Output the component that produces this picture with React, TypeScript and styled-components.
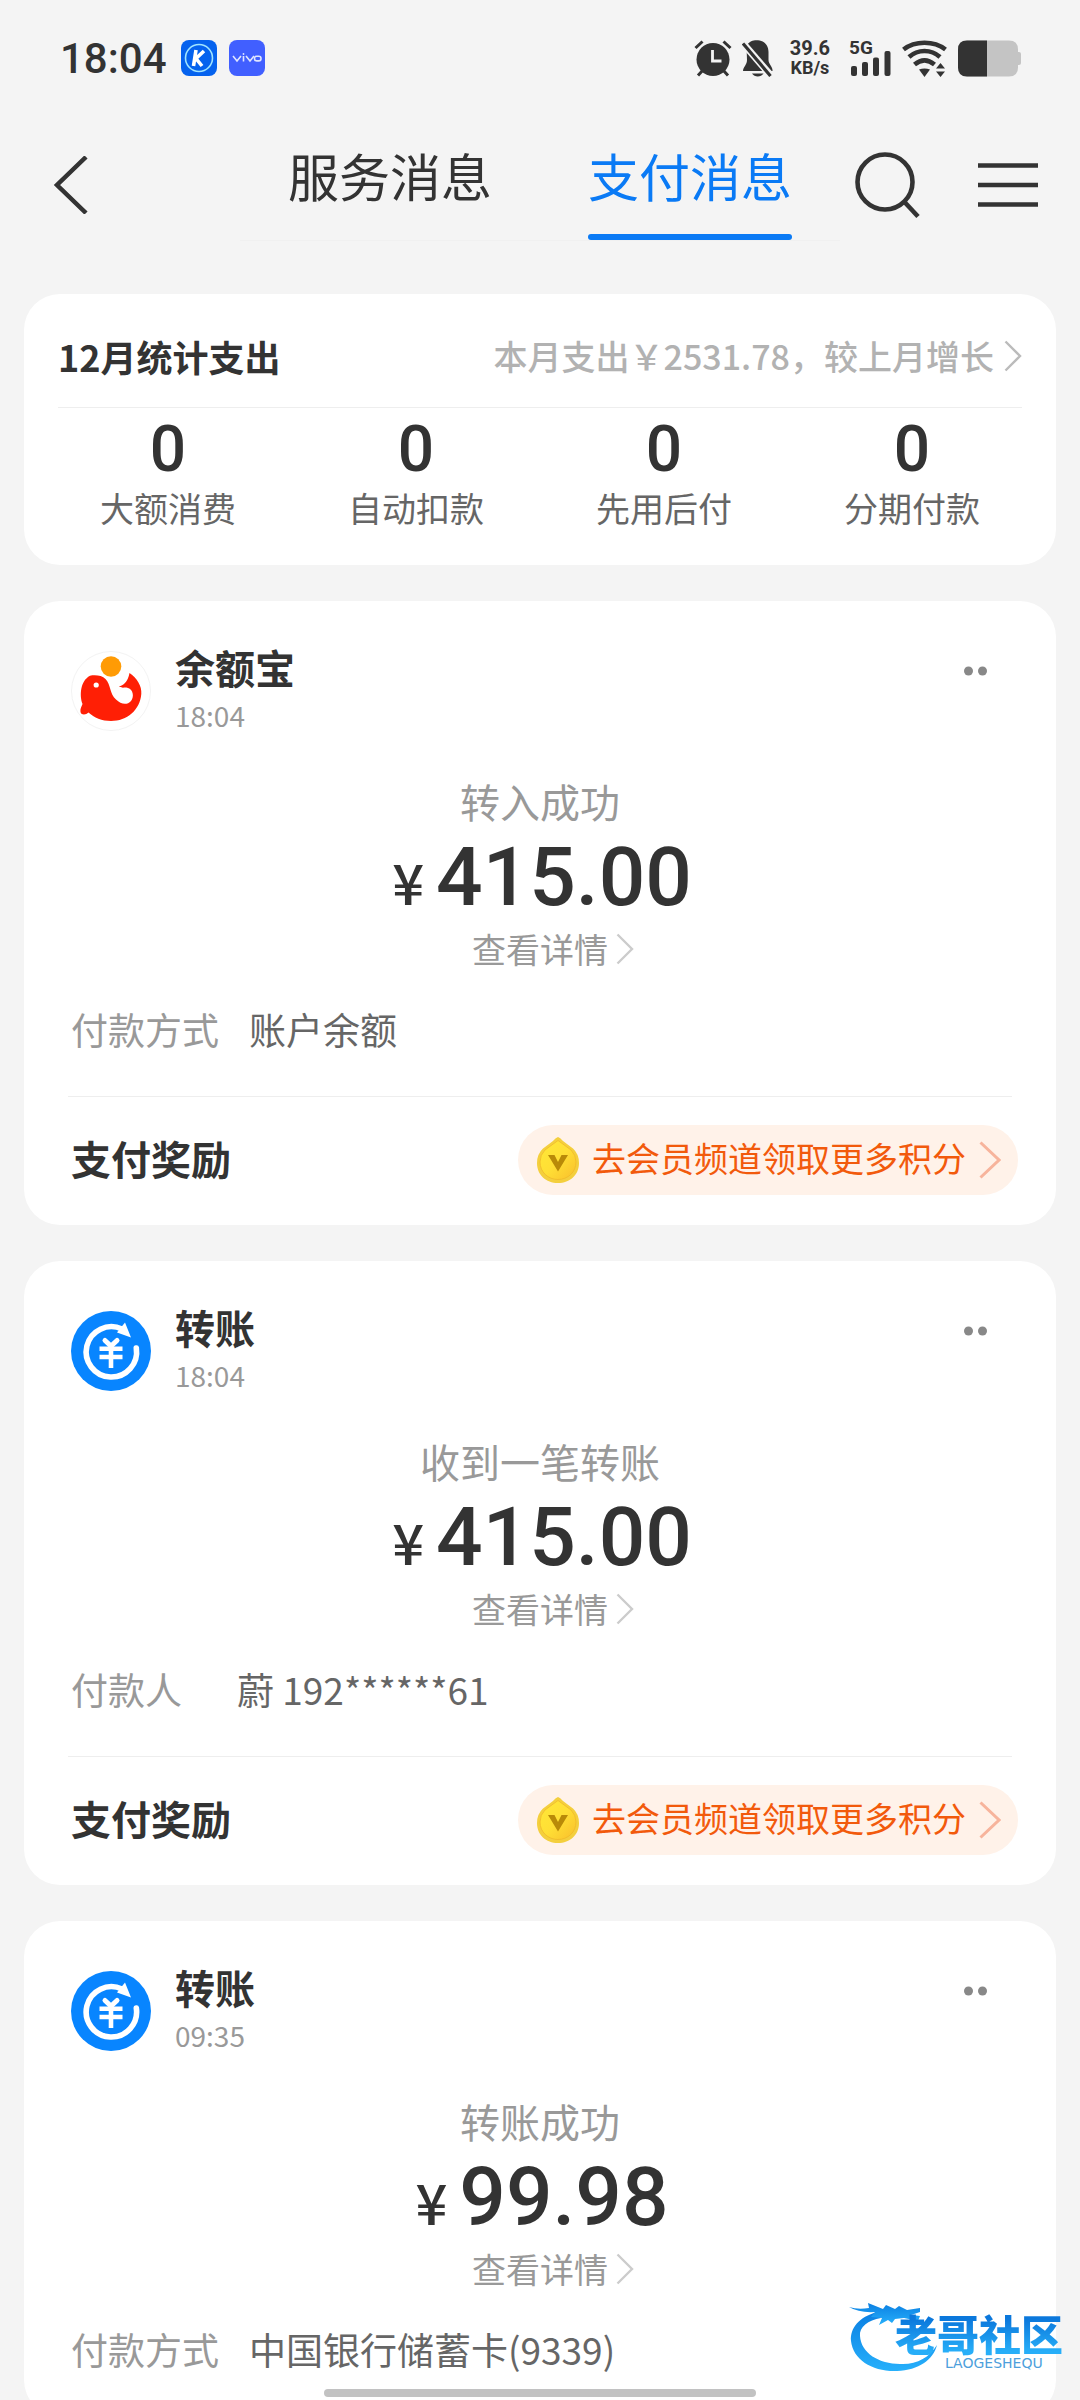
import React from 'react';
import styled, { createGlobalStyle } from 'styled-components';

const CJK = `"Noto Sans CJK SC", "Noto Sans", sans-serif`;
const LATIN = `Roboto, "Noto Sans CJK SC", sans-serif`;

const GlobalStyle = createGlobalStyle`
  * { box-sizing: border-box; }
  body { margin: 0; background: #f4f4f4; font-family: ${CJK}; color: #333; }
  button { border: 0; padding: 0; background: none; font: inherit; color: inherit; cursor: pointer; }
  a { color: inherit; text-decoration: none; }
  svg { display: block; flex: none; }
  h2, p, dl, dt, dd { margin: 0; }
`;

const Screen = styled.div`
  position: relative;
  display: flex;
  flex-direction: column;
  height: 100vh;
  overflow: hidden;
`;

const StatusBar = styled.header`
  display: flex;
  flex: none;
  justify-content: space-between;
  align-items: center;
  height: 116px;
  padding: 0 58px 0 60px;
`;

const StatusGroup = styled.div<{ $gap: number }>`
  display: flex;
  align-items: center;
  gap: ${(p) => p.$gap}px;
`;

const Clock = styled.time`
  padding: 2px 2px 0 0;
  font: 500 42px/44px ${LATIN};
`;

const NetSpeed = styled.div`
  padding: 0 10px 0 6px;
  font: 700 20px/20px ${LATIN};
  text-align: center;
`;

const SpeedUnit = styled.div`
  font-size: 18px;
`;

const Signal = styled.div`
  position: relative;
`;

const SignalLabel = styled.span`
  position: absolute;
  top: -2px;
  left: -1px;
  font: 700 19px/20px ${LATIN};
`;

const NavBar = styled.nav`
  display: grid;
  flex: none;
  grid-template-columns: 2fr 5fr 2fr;
  height: 124px;
`;

const NavSide = styled.div`
  display: flex;
  align-items: center;
  justify-content: space-between;
  padding: 12px 40px 0 14px;

  &:first-child { padding-left: 50px; }
`;

const Tabs = styled.div`
  display: grid;
  grid-template-columns: 1fr 1fr;
  border-bottom: 1px solid #f0f0f0;
`;

const Tab = styled.button<{ $active?: boolean }>`
  display: flex;
  flex-direction: column;
  align-items: center;
  justify-self: center;
  font-size: 51px;
  line-height: 118px;
  color: ${(p) => (p.$active ? '#0a7af5' : '#333')};

  &::after {
    content: '';
    width: 100%;
    height: 6px;
    border-radius: 3px;
    background: ${(p) => (p.$active ? '#0a7af5' : 'transparent')};
  }
`;

const Feed = styled.main`
  display: flex;
  flex: 1;
  flex-direction: column;
  gap: 36px;
  min-height: 0;
  padding: 54px 24px 0;
  overflow: hidden;
`;

const Card = styled.section`
  flex: none;
  border-radius: 36px;
  background: #fff;
`;

const SummaryHead = styled.div`
  display: flex;
  justify-content: space-between;
  align-items: center;
  margin: 0 34px;
  padding: 38px 0 27px;
  border-bottom: 1px solid #eee;
  line-height: 48px;
`;

const SummaryTitle = styled.h2`
  font-size: 36px;
  font-weight: 700;
`;

const SummaryLink = styled.a`
  display: flex;
  align-items: center;
  gap: 10px;
  font-size: 34px;
  font-weight: 500;
  color: #b2b2b2;
`;

const Stats = styled.dl`
  display: grid;
  grid-template-columns: repeat(4, 1fr);
  padding: 10px 20px 37px;
  text-align: center;
`;

const Stat = styled.div`
  display: flex;
  flex-direction: column-reverse;
  gap: 6px;
`;

const StatName = styled.dt`
  font-size: 34px;
  line-height: 40px;
  color: #666;
`;

const StatValue = styled.dd`
  font: 500 64px/64px ${LATIN};
`;

const CardHead = styled.div`
  display: flex;
  gap: 24px;
  padding: 46px 69px 0 47px;
`;

const Avatar = styled.div`
  padding-top: 4px;
`;

const Sender = styled.div`
  flex: 1;
`;

const SenderName = styled.h2`
  font-size: 40px;
  font-weight: 700;
  line-height: 40px;
`;

const SentAt = styled.time`
  display: block;
  margin-top: 12px;
  font-size: 28px;
  line-height: 32px;
  color: #999;
`;

const MoreButton = styled.button`
  align-self: flex-start;
  display: flex;
  align-items: center;
  height: 48px;
`;

const Result = styled.div`
  display: flex;
  flex-direction: column;
  align-items: center;
  padding-top: 46px;
`;

const ResultText = styled.p`
  font-size: 40px;
  line-height: 48px;
  color: #999;
`;

const Amount = styled.p`
  display: flex;
  align-items: baseline;
  gap: 12px;
  margin: 4px 0;
  padding-left: 4px;
  font: 500 82px/96px ${LATIN};
`;

const Currency = styled.span`
  font-family: ${CJK};
  font-size: 56px;
  line-height: 60px;
`;

const DetailLink = styled.a`
  display: flex;
  align-items: center;
  gap: 8px;
  padding-left: 26px;
  font-size: 34px;
  line-height: 40px;
  color: #999;
`;

const Field = styled.dl`
  display: flex;
  gap: 30px;
  padding: 36px 46px 43px 47px;
  font-size: 37px;
  line-height: 48px;
`;

const FieldName = styled.dt`
  min-width: 136px;
  color: #999;
`;

const FieldValue = styled.dd`
  color: #666;
`;

const Reward = styled.div`
  display: flex;
  justify-content: space-between;
  align-items: center;
  padding: 28px 38px 30px 47px;
`;

const Rule = styled.div`
  height: 1px;
  margin: 0 44px;
  background: #eee;
`;

const RewardTitle = styled.h2`
  padding-bottom: 4px;
  font-size: 40px;
  font-weight: 700;
  line-height: 48px;
`;

const RewardLink = styled.a`
  display: flex;
  align-items: center;
  gap: 13px;
  height: 70px;
  padding: 0 17px 0 19px;
  border-radius: 35px;
  background: #fff2e9;
`;

const RewardText = styled.span`
  padding-bottom: 4px;
  font-size: 34px;
  line-height: 48px;
  color: #f25a0c;
`;

const HomeIndicator = styled.div`
  position: absolute;
  bottom: 3px;
  left: 30%;
  right: 30%;
  height: 8px;
  border-radius: 4px;
  background: #c2c2c2;
`;

const Watermark = styled.div`
  position: absolute;
  right: 17px;
  bottom: 26px;
  display: flex;
  align-items: flex-end;
`;

const WatermarkText = styled.div`
  margin: 0 0 4px -46px;
`;

const WatermarkName = styled.div`
  font-size: 42px;
  font-weight: 900;
  line-height: 46px;
  color: transparent;
  background: linear-gradient(#0b78dc 20%, #27aef8 90%);
  background-clip: text;
  -webkit-background-clip: text;
`;

const WatermarkLatin = styled.div`
  padding-left: 50px;
  font: 14px/14px "DejaVu Sans", sans-serif;
  color: #4d9fdc;
`;

function Chevron({ w, h, color, stroke }: { w: number; h: number; color: string; stroke: number }) {
  return (
    <svg width={w} height={h} viewBox={`0 0 ${w} ${h}`} fill="none" stroke={color} strokeWidth={stroke}>
      <path d={`M1.5 1.5 L${w - 2} ${h / 2} L1.5 ${h - 1.5}`} />
    </svg>
  );
}

function KAppIcon() {
  return (
    <svg width="36" height="36" viewBox="0 0 36 36">
      <rect width="36" height="36" rx="8" fill="#0562ee" />
      <circle cx="18" cy="18" r="13.5" fill="none" stroke="#9fe4ff" strokeWidth="1.6" />
      <path d="M15 10 L12.5 26 M23 11 L15 18.5 L21 26" fill="none" stroke="#fff" strokeWidth="3.6" />
    </svg>
  );
}

function VivoAppIcon() {
  return (
    <svg width="36" height="36" viewBox="0 0 36 36">
      <rect width="36" height="36" rx="8" fill="#415fff" />
      <g fill="none" stroke="#dfe5ff" strokeWidth="1.6">
        <path d="M4 16 L8 21 L12 16 M14.5 16 V21.5 M17 16 L21 21 L25 16" />
        <rect x="25.5" y="16.3" width="6.5" height="4.6" rx="2.2" />
      </g>
      <circle cx="14.5" cy="14" r="0.9" fill="#dfe5ff" />
    </svg>
  );
}

function AlarmIcon() {
  return (
    <svg width="38" height="37" viewBox="0 0 38 37">
      <g stroke="#333" strokeWidth="3" fill="none">
        <path d="M1.5 8 L8.5 1.5 M29.5 1.5 L36.5 8 M4 35.5 L9 30 M34 35.5 L29 30" />
      </g>
      <circle cx="19" cy="19.5" r="16.5" fill="#333" />
      <path d="M18.5 10 V21 H27.5" fill="none" stroke="#f4f4f4" strokeWidth="2.8" />
    </svg>
  );
}

function MutedBellIcon() {
  return (
    <svg width="32" height="37" viewBox="0 0 32 37" fill="#333">
      <path d="M4.5 5.5 C8 0.5 12 0 16 0.3 C23 1 26.5 6 26.5 12 V20 C26.5 24 31 27 30.5 31 H1 C1 27 5 25 5 20 Z" />
      <path d="M10 33.5 H21.5 C19 37.5 12.5 37.5 10 33.5 Z" />
      <path d="M-1 1 L31 38" stroke="#f4f4f4" strokeWidth="7" />
      <path d="M1 3.5 L28.5 36" stroke="#333" strokeWidth="3.2" />
    </svg>
  );
}

function SignalBars() {
  return (
    <svg width="42" height="36" viewBox="0 0 42 36" fill="#333">
      <rect x="1" y="26" width="6" height="10" rx="2" />
      <rect x="12" y="22" width="6" height="14" rx="2" />
      <rect x="23" y="17.5" width="6" height="18.5" rx="2" />
      <rect x="34.5" y="11" width="6" height="25" rx="2" />
    </svg>
  );
}

function WifiIcon() {
  return (
    <svg width="46" height="37" viewBox="0 0 46 37" fill="none" stroke="#333" strokeWidth="4.6">
      <path d="M1.5 9.5 C13 0.5 32 0.5 43.5 9.5" />
      <path d="M7 17 C16 9 29 9 38 17" />
      <path d="M12.5 24.5 C19 19 26 19 32.5 24.5" />
      <path d="M17 29.5 Q22.5 27.5 28 29.5 L22.5 37 Z" fill="#333" stroke="none" />
      <path d="M34 28.5 L38.5 23 L43 28.5 Z M34 31.5 L38.5 37 L43 31.5 Z" fill="#333" stroke="none" />
    </svg>
  );
}

function BatteryIcon() {
  return (
    <svg width="64" height="37" viewBox="0 0 64 37">
      <path d="M9 0.5 H51 Q60 0.5 60 9.5 V12 H61 Q63 12 63 14 V23 Q63 25 61 25 H60 V27.5 Q60 36.5 51 36.5 H9 Q0 36.5 0 27.5 V9.5 Q0 0.5 9 0.5 Z" fill="#c4c4c4" />
      <path d="M9 0.5 H29 V36.5 H9 Q0 36.5 0 27.5 V9.5 Q0 0.5 9 0.5 Z" fill="#333" />
    </svg>
  );
}

function BackIcon() {
  return (
    <svg width="38" height="58" viewBox="0 0 38 58" fill="none" stroke="#333" strokeWidth="4.5">
      <path d="M36 1 L7 29 L36 57" />
    </svg>
  );
}

function SearchIcon() {
  return (
    <svg width="66" height="68" viewBox="0 0 66 68" fill="none" stroke="#333" strokeWidth="4.6">
      <circle cx="31" cy="31" r="27.5" />
      <path d="M50.5 51 L64 65.5" />
    </svg>
  );
}

function MenuIcon() {
  return (
    <svg width="62" height="44" viewBox="0 0 62 44" stroke="#333" strokeWidth="4.4">
      <path d="M0 2.5 H60 M0 22 H60 M0 41.5 H60" />
    </svg>
  );
}

function YuebaoIcon() {
  return (
    <svg width="80" height="80" viewBox="0 0 80 80">
      <circle cx="40" cy="40" r="39.5" fill="#fff" stroke="#f3f3f3" />
      <circle cx="40" cy="15.5" r="10.3" fill="#ff9b05" />
      <path
        d="M19 24.8 C24 23.8 31 24.3 34.5 28 C40 33.5 38.5 43 45 48.5 C50 53.5 56 54.5 60 50 C63.5 45.5 62 38.5 57 37 C54 36 50 37.5 48 35.5 C52 34.5 57 31 58.5 22 C66 27 71 35 70.3 43 C69 59 56 70 40 70 C31 70 23 66.5 17.5 61.5 C15 64 10.5 64.5 9.5 61 C9 58 10.5 55.5 11.5 53 C8.5 45 9 30 19 24.8 Z"
        fill="#ff1f05"
      />
      <circle cx="25.2" cy="34" r="2.6" fill="#fff" />
    </svg>
  );
}

function TransferIcon() {
  return (
    <svg width="80" height="80" viewBox="0 0 80 80">
      <circle cx="40" cy="40" r="40" fill="#0885ff" />
      <g fill="none" stroke="#fff" strokeLinecap="round">
        <path d="M65.3 37 A25.2 25.2 0 1 1 51 18" strokeWidth="5.6" />
        <path d="M34 29.5 L40 35 L46 29.5" strokeWidth="5" />
      </g>
      <path d="M54 11.5 L60 26.5 L46 21.5 Z" fill="#fff" />
      <path d="M28.5 37.8 H51.5 M28.5 46 H51.5 M40 35 V57" fill="none" stroke="#fff" strokeWidth="4.6" />
    </svg>
  );
}

function CoinIcon() {
  return (
    <svg width="42" height="46" viewBox="0 0 42 46">
      <defs>
        <linearGradient id="coin" x1="0" y1="0" x2="1" y2="1">
          <stop offset="0" stopColor="#ffe838" />
          <stop offset="0.5" stopColor="#ffdf35" />
          <stop offset="1" stopColor="#f9bf2c" />
        </linearGradient>
      </defs>
      <path d="M21 0 Q23 0.5 26 4 L36 11.5 Q42 17 42 26 C42 38 33 46 21 46 C9 46 0 38 0 26 Q0 17 6 11.5 L16 4 Q19 0.5 21 0 Z" fill="#f4cf3d" />
      <path d="M21 3.5 L34 13 Q39 18 39 25 C39 35 31 42.5 21 42.5 C11 42.5 3 35 3 25 Q3 18 8 13 Z" fill="url(#coin)" stroke="#f0b92a" strokeWidth="0.8" />
      <path d="M11 18 H17.5 L21 25 L24.5 18 H31 L21 34.5 Z" fill="#b98a08" />
    </svg>
  );
}

function DragonLogo() {
  return (
    <svg width="92" height="76" viewBox="0 0 92 76">
      <defs>
        <linearGradient id="dragon" x1="0" y1="0" x2="0" y2="1">
          <stop offset="0" stopColor="#0b7fe2" />
          <stop offset="1" stopColor="#27b0fb" />
        </linearGradient>
      </defs>
      <g fill="url(#dragon)">
        <path d="M28 14 C10 19 1 30 2 43 C4 62 24 74 48 73 C70 72 84 62 88 47 C80 60 67 67 51 66 C30 66 12 55 11 38 C10 29 19 22 32 20 Z" />
        <path d="M0 9 Q9 12 20 10 L19 5 L34 11 L37 7 L46 11 L50 8 L58 12 L71 10 V14 L62 17 L71 18 L69 23 L55 20 L46 21 L43 25 L39 22 L30 27 L33 20 L22 19 L26 14 Q10 15 0 9 Z" />
      </g>
    </svg>
  );
}

const stats = [
  { name: '大额消费', value: 0 },
  { name: '自动扣款', value: 0 },
  { name: '先用后付', value: 0 },
  { name: '分期付款', value: 0 },
];

type Message = {
  icon: React.ReactNode;
  name: string;
  time: string;
  result: string;
  amount: string;
  field: string;
  value: string;
  reward?: string;
};

const messages: Message[] = [
  { icon: <YuebaoIcon />, name: '余额宝', time: '18:04', result: '转入成功', amount: '415.00', field: '付款方式', value: '账户余额', reward: '去会员频道领取更多积分' },
  { icon: <TransferIcon />, name: '转账', time: '18:04', result: '收到一笔转账', amount: '415.00', field: '付款人', value: '蔚 192******61', reward: '去会员频道领取更多积分' },
  { icon: <TransferIcon />, name: '转账', time: '09:35', result: '转账成功', amount: '99.98', field: '付款方式', value: '中国银行储蓄卡(9339)' },
];

function MessageCard({ message }: { message: Message }) {
  return (
    <Card>
      <CardHead>
        <Avatar>{message.icon}</Avatar>
        <Sender>
          <SenderName>{message.name}</SenderName>
          <SentAt>{message.time}</SentAt>
        </Sender>
        <MoreButton aria-label="更多">
          <svg width="23" height="10" viewBox="0 0 23 10" fill="#888">
            <circle cx="4.5" cy="5" r="4.5" />
            <circle cx="18.5" cy="5" r="4.5" />
          </svg>
        </MoreButton>
      </CardHead>
      <Result>
        <ResultText>{message.result}</ResultText>
        <Amount>
          <Currency>¥</Currency>
          {message.amount}
        </Amount>
        <DetailLink href="#detail">
          查看详情
          <Chevron w={18} h={32} color="#ccc" stroke={2.4} />
        </DetailLink>
      </Result>
      <Field>
        <FieldName>{message.field}</FieldName>
        <FieldValue>{message.value}</FieldValue>
      </Field>
      {message.reward && (
        <>
          <Rule />
          <Reward>
            <RewardTitle>支付奖励</RewardTitle>
            <RewardLink href="#reward">
              <CoinIcon />
              <RewardText>{message.reward}</RewardText>
              <Chevron w={22} h={38} color="#f7b49c" stroke={3} />
            </RewardLink>
          </Reward>
        </>
      )}
    </Card>
  );
}

export default function App() {
  return (
    <Screen>
      <GlobalStyle />
      <StatusBar>
        <StatusGroup $gap={12}>
          <Clock>18:04</Clock>
          <KAppIcon />
          <VivoAppIcon />
        </StatusGroup>
        <StatusGroup $gap={10}>
          <AlarmIcon />
          <MutedBellIcon />
          <NetSpeed>
            39.6
            <SpeedUnit>KB/s</SpeedUnit>
          </NetSpeed>
          <Signal>
            <SignalLabel>5G</SignalLabel>
            <SignalBars />
          </Signal>
          <WifiIcon />
          <BatteryIcon />
        </StatusGroup>
      </StatusBar>
      <NavBar>
        <NavSide>
          <button aria-label="返回"><BackIcon /></button>
        </NavSide>
        <Tabs>
          <Tab>服务消息</Tab>
          <Tab $active>支付消息</Tab>
        </Tabs>
        <NavSide>
          <button aria-label="搜索"><SearchIcon /></button>
          <button aria-label="菜单"><MenuIcon /></button>
        </NavSide>
      </NavBar>
      <Feed>
        <Card>
          <SummaryHead>
            <SummaryTitle>12月统计支出</SummaryTitle>
            <SummaryLink href="#summary">
              本月支出￥2531.78，较上月增长
              <Chevron w={18} h={32} color="#bbb" stroke={2.4} />
            </SummaryLink>
          </SummaryHead>
          <Stats>
            {stats.map((s) => (
              <Stat key={s.name}>
                <StatName>{s.name}</StatName>
                <StatValue>{s.value}</StatValue>
              </Stat>
            ))}
          </Stats>
        </Card>
        {messages.map((m, i) => (
          <MessageCard key={i} message={m} />
        ))}
      </Feed>
      <Watermark>
        <DragonLogo />
        <WatermarkText>
          <WatermarkName>老哥社区</WatermarkName>
          <WatermarkLatin>LAOGESHEQU</WatermarkLatin>
        </WatermarkText>
      </Watermark>
      <HomeIndicator />
    </Screen>
  );
}
